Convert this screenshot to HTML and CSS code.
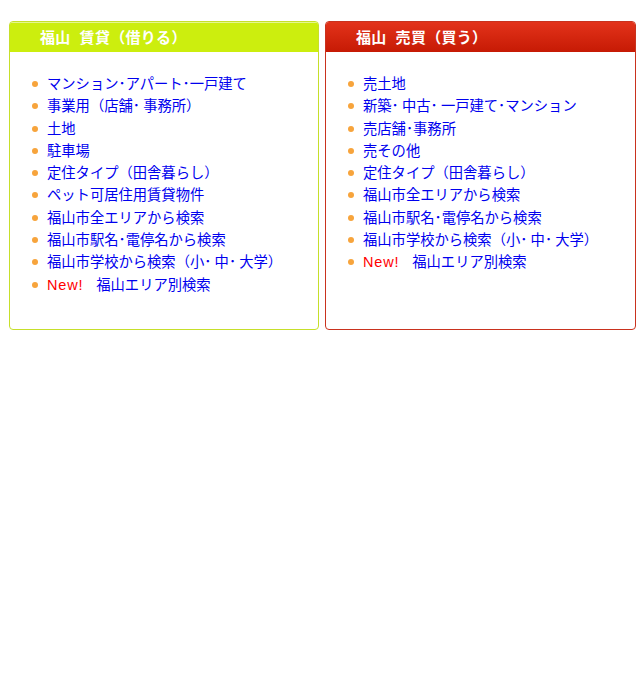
FILE: index.html
```html
<!DOCTYPE html>
<html lang="ja">
<head>
  <meta charset="UTF-8">
  <title>福山 不動産</title>
  <link rel="stylesheet" href="styles.css">
</head>
<body>
  <div class="wrapper">
    <!-- 賃貸 -->
    <div class="box rent">
      <h2 class="box-title">福山<span class="sp"></span>賃貸（借りる）</h2>
      <ul class="links">
        <li><a href="#">マンション･アパート･一戸建て</a></li>
        <li><a href="#">事業用（店舗･ 事務所）</a></li>
        <li><a href="#">土地</a></li>
        <li><a href="#">駐車場</a></li>
        <li><a href="#">定住タイプ（田舎暮らし）</a></li>
        <li><a href="#">ペット可居住用賃貸物件</a></li>
        <li><a href="#">福山市全エリアから検索</a></li>
        <li><a href="#">福山市駅名･電停名から検索</a></li>
        <li><a href="#">福山市学校から検索（小･ 中･ 大学）</a></li>
        <li><span class="new">New!</span><a href="#">福山エリア別検索</a></li>
      </ul>
    </div>

    <!-- 売買 -->
    <div class="box buy">
      <h2 class="box-title">福山<span class="sp"></span>売買（買う）</h2>
      <ul class="links">
        <li><a href="#">売土地</a></li>
        <li><a href="#">新築･ 中古･ 一戸建て･マンション</a></li>
        <li><a href="#">売店舗･事務所</a></li>
        <li><a href="#">売その他</a></li>
        <li><a href="#">定住タイプ（田舎暮らし）</a></li>
        <li><a href="#">福山市全エリアから検索</a></li>
        <li><a href="#">福山市駅名･電停名から検索</a></li>
        <li><a href="#">福山市学校から検索（小･ 中･ 大学）</a></li>
        <li><span class="new">New!</span><a href="#">福山エリア別検索</a></li>
      </ul>
    </div>
  </div>
</body>
</html>
```

FILE: styles.css
```css
body {
  margin: 0;
  padding: 0;
  background: #fff;
  font-family: "Noto Sans CJK JP", "Liberation Sans", sans-serif;
}

.wrapper {
  display: flex;
  gap: 6px;
  padding: 21px 8px 0 9px;
}

.box {
  width: 308px;
  height: 307px;
  border: 1px solid #c6df2a;
  border-radius: 4px;
  overflow: hidden;
}

.box.buy {
  width: 309px;
  border-color: #c9321e;
}

.box-title {
  margin: 0;
  height: 30px;
  line-height: 28px;
  padding-left: 30px;
  font-size: 15px;
  font-weight: bold;
  color: #fff;
  letter-spacing: 0.3px;
  background: #ccee0e;
  border-top: 1px solid #e4f790;
  box-sizing: border-box;
}

.box-title .sp {
  display: inline-block;
  width: 9px;
}

.buy .box-title {
  background: linear-gradient(#e2321a, #c61a04);
  border-top: 1px solid #e2321a;
}

.links {
  list-style: none;
  margin: 20px 0 0 0;
  padding: 0 0 0 22px;
}

.links li {
  position: relative;
  padding-left: 15px;
  height: 22.3px;
  line-height: 22.3px;
  font-size: 14.3px;
}

.links li::before {
  content: "";
  position: absolute;
  left: 0;
  top: 9px;
  width: 6px;
  height: 6px;
  border-radius: 50%;
  background: #f7a43c;
}

.links a {
  color: #0000ee;
  text-decoration: none;
}

.new {
  color: #ff0000;
  font-family: "Liberation Sans", sans-serif;
  font-size: 14.5px;
  letter-spacing: 0.8px;
  margin-right: 13px;
}
```
